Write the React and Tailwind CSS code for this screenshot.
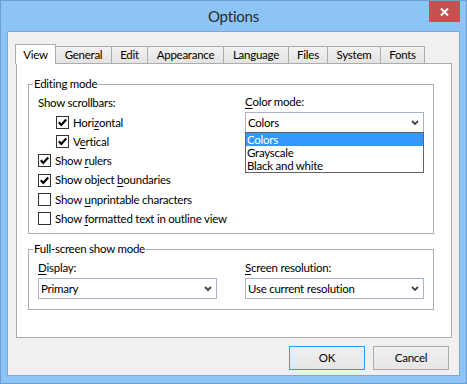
import React from 'react';

const tabs = [
  { name: 'View', w: 'w-[41px]' },
  { name: 'General', w: 'w-[56px]' },
  { name: 'Edit', w: 'w-[36px]' },
  { name: 'Appearance', w: 'w-[76px]' },
  { name: 'Language', w: 'w-[65px]' },
  { name: 'Files', w: 'w-[39px]' },
  { name: 'System', w: 'w-[53px]' },
  { name: 'Fonts', w: 'w-[44px]' },
];

const Check = ({ checked }) => (
  <span className="w-[13px] h-[13px] border border-[#333333] bg-white flex items-center justify-center shrink-0">
    {checked && (
      <svg width="11" height="11" viewBox="0 0 11 11">
        <path d="M1.8 5.3 L4.3 7.9 L9.2 2.6" fill="none" stroke="#000" strokeWidth="2.2" />
      </svg>
    )}
  </span>
);

const CheckRow = ({ checked, children, className = 'h-[19px]' }) => (
  <div className={`flex items-center gap-[4px] ${className}`}>
    <Check checked={checked} />
    <span>{children}</span>
  </div>
);

const Chevron = () => (
  <svg width="8" height="6" viewBox="0 0 8 6" className="shrink-0">
    <path d="M1 1 L4 4 L7 1" fill="none" stroke="#444" strokeWidth="1.8" />
  </svg>
);

const Select = ({ value }) => (
  <div className="w-[179px] h-[21px] border border-[#A9B4C6] bg-white flex items-center justify-between pl-[2px] pr-[4px]">
    <span>{value}</span>
    <Chevron />
  </div>
);

const Mn = ({ children }) => <span className="underline underline-offset-[2px]">{children}</span>;

export default function App() {
  return (
    <div
      className="w-[467px] h-[384px] bg-[#8CC5F5] border border-[#6E9FD0] flex flex-col text-[11.5px] tracking-[-0.25px] text-black"
      style={{ fontFamily: 'Lato, "Noto Sans", sans-serif' }}
    >
      <div className="h-[30px] relative flex items-center justify-center shrink-0">
        <span className="text-[15px] tracking-[-0.2px] text-[#2b2b2b]">Options</span>
        <div className="absolute top-0 right-[6px] w-[31px] h-[21px] bg-[#C75050] flex items-center justify-center">
          <svg width="9" height="8" viewBox="0 0 9 8">
            <path d="M1 0.5 L8 7.5 M8 0.5 L1 7.5" stroke="#fff" strokeWidth="2" />
          </svg>
        </div>
      </div>

      <div className="mx-[6px] h-[345px] bg-[#F0F0F0] border border-[#7FA9D3] flex flex-col">
        <div className="flex items-end h-[19px] mt-[12px] pl-[7px]">
          {tabs.map((t, i) =>
            i === 0 ? (
              <div
                key={t.name}
                className={`${t.w} h-[20px] -mb-px relative z-10 bg-white border border-b-0 border-[#ACACAC] flex items-center justify-center`}
              >
                {t.name}
              </div>
            ) : (
              <div
                key={t.name}
                className={`${t.w} h-[17px] bg-gradient-to-b from-[#F2F2F2] to-[#E3E3E3] border-t border-r border-[#ACACAC] flex items-center justify-center`}
              >
                {t.name}
              </div>
            )
          )}
        </div>

        <div className="ml-[8px] w-[436px] h-[275px] bg-white border border-[#ACACAC] flex flex-col">
          <fieldset className="ml-[11px] mt-[12px] w-[406px] border border-[#ABABAB] pl-[4px] pb-[5px]">
            <legend className="px-[1px] leading-[16px]">Editing mode</legend>
            <div className="pl-[5px] flex">
              <div className="w-[207px] flex flex-col">
                <div className="h-[21px] flex items-center">Show scrollbars:</div>
                <div className="pl-[18px] flex flex-col">
                  <CheckRow checked>
                    Hori<Mn>z</Mn>ontal
                  </CheckRow>
                  <CheckRow checked>
                    V<Mn>e</Mn>rtical
                  </CheckRow>
                </div>
                <CheckRow checked>
                  Show <Mn>r</Mn>ulers
                </CheckRow>
                <CheckRow checked className="h-[20px]">
                  Show object <Mn>b</Mn>oundaries
                </CheckRow>
                <CheckRow>
                  Show <Mn>u</Mn>nprintable characters
                </CheckRow>
                <CheckRow>
                  Show <Mn>f</Mn>ormatted text in outline view
                </CheckRow>
              </div>
              <div className="flex flex-col">
                <div className="h-[20px] flex items-center">
                  <Mn>C</Mn>olor mode:
                </div>
                <div className="relative">
                  <Select value="Colors" />
                  <div className="absolute left-0 top-full -mt-px w-[179px] border border-[#646464] bg-white flex flex-col leading-[13px] z-10">
                    <div className="bg-[#3399FF] text-white pl-[1px] h-[13px]">Colors</div>
                    <div className="pl-[1px] h-[13px]">Grayscale</div>
                    <div className="pl-[1px] h-[13px]">Black and white</div>
                  </div>
                </div>
              </div>
            </div>
          </fieldset>

          <fieldset className="ml-[11px] mt-[7px] w-[406px] border border-[#ABABAB] pl-[4px] pb-[10px]">
            <legend className="px-[1px] leading-[16px]">Full-screen show mode</legend>
            <div className="pl-[5px] flex">
              <div className="w-[207px] flex flex-col">
                <div className="h-[21px] flex items-center">
                  <Mn>D</Mn>isplay:
                </div>
                <Select value="Primary" />
              </div>
              <div className="flex flex-col">
                <div className="h-[21px] flex items-center">
                  <Mn>S</Mn>creen resolution:
                </div>
                <Select value="Use current resolution" />
              </div>
            </div>
          </fieldset>
        </div>

        <div className="flex justify-end gap-[8px] mt-[8px] mr-[10px]">
          <button className="w-[76px] h-[24px] border border-[#3399FF] bg-gradient-to-b from-[#F0F0F0] to-[#E5E5E5]">
            OK
          </button>
          <button className="w-[76px] h-[24px] border border-[#ACACAC] bg-gradient-to-b from-[#F0F0F0] to-[#E5E5E5]">
            Cancel
          </button>
        </div>
      </div>
    </div>
  );
}
